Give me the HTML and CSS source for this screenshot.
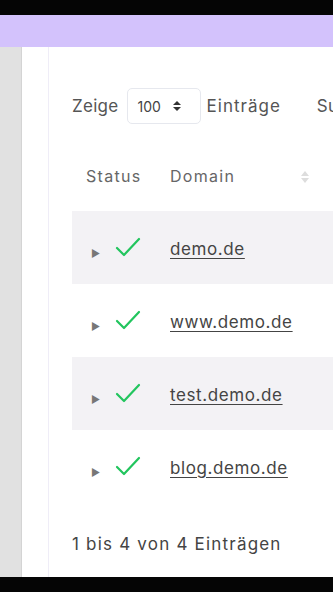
FILE: index.html
```html
<!DOCTYPE html>
<html lang="de">
<head>
    <meta charset="UTF-8">
    <meta name="viewport" content="width=device-width, initial-scale=1.0">
    <title>Domains</title>
    <link rel="stylesheet" href="styles.css">
</head>
<body>

<div class="screen">
    <div class="black-bar"></div>
    <div class="topnav"></div>
    <div class="main">
        <div class="sidebar"></div>
        <div class="gutter"></div>
        <div class="card">
            <div class="toolbar">
                <span>Zeige</span>
                <div class="select">
                    <span>100</span>
                    <svg width="10" height="12" viewBox="0 0 10 12">
                        <path d="M1 5 L5 1 L9 5 Z M1 7 L5 11 L9 7 Z" fill="#333"/>
                    </svg>
                </div>
                <span>Einträge</span>
                <span class="search">Suchen</span>
            </div>

            <table class="domains">
                <thead>
                    <tr>
                        <th class="col-status">Status</th>
                        <th class="col-domain">Domain
                            <svg class="sort" width="8" height="14" viewBox="0 0 8 14">
                                <path d="M0 6 L4 1 L8 6 Z M0 8 L4 13 L8 8 Z" fill="#ddd"/>
                            </svg>
                        </th>
                    </tr>
                </thead>
                <tbody>
                    <tr class="odd">
                        <td class="col-status"><span class="caret">&#9654;</span><svg class="check" width="26" height="20" viewBox="0 0 26 20"><path d="M2 11 L9 18 L24 2" fill="none" stroke="#22c55e" stroke-width="2.2" stroke-linecap="round" stroke-linejoin="round"/></svg></td>
                        <td class="col-domain"><a href="#">demo.de</a></td>
                    </tr>
                    <tr>
                        <td class="col-status"><span class="caret">&#9654;</span><svg class="check" width="26" height="20" viewBox="0 0 26 20"><path d="M2 11 L9 18 L24 2" fill="none" stroke="#22c55e" stroke-width="2.2" stroke-linecap="round" stroke-linejoin="round"/></svg></td>
                        <td class="col-domain"><a href="#">www.demo.de</a></td>
                    </tr>
                    <tr class="odd">
                        <td class="col-status"><span class="caret">&#9654;</span><svg class="check" width="26" height="20" viewBox="0 0 26 20"><path d="M2 11 L9 18 L24 2" fill="none" stroke="#22c55e" stroke-width="2.2" stroke-linecap="round" stroke-linejoin="round"/></svg></td>
                        <td class="col-domain"><a href="#">test.demo.de</a></td>
                    </tr>
                    <tr>
                        <td class="col-status"><span class="caret">&#9654;</span><svg class="check" width="26" height="20" viewBox="0 0 26 20"><path d="M2 11 L9 18 L24 2" fill="none" stroke="#22c55e" stroke-width="2.2" stroke-linecap="round" stroke-linejoin="round"/></svg></td>
                        <td class="col-domain"><a href="#">blog.demo.de</a></td>
                    </tr>
                </tbody>
            </table>

            <div class="info">1 bis 4 von 4 Einträgen</div>
        </div>
    </div>
    <div class="black-bar"></div>
</div>

</body>
</html>
```

FILE: styles.css
```css
* {
    margin: 0;
    padding: 0;
    box-sizing: border-box;
    font-family: 'Inter', 'Roboto', sans-serif;
}

body {
    background-color: #000;
    overflow: hidden;
}

.screen {
    display: flex;
    flex-direction: column;
    width: 333px;
    height: 592px;
}

.black-bar {
    height: 15px;
    background-color: #050505;
}

.topnav {
    height: 32px;
    background-color: #d3c2fc;
}

.main {
    flex: 1;
    display: flex;
    background-color: #fff;
    overflow: hidden;
}

.sidebar {
    width: 22px;
    background-color: #e1e1e1;
    border-right: 1px solid #d4d4d4;
}

.gutter {
    width: 26px;
    background-color: #fff;
}

.card {
    flex: 1;
    border-left: 1px solid #efedf7;
    padding: 41px 0 0 23px;
    white-space: nowrap;
    overflow: hidden;
}

/* Show entries row */
.toolbar {
    display: flex;
    align-items: center;
    font-size: 17px;
    letter-spacing: 0.3px;
    color: #555;
    height: 36px;
}

.toolbar > span {
    flex-shrink: 0;
}

.toolbar > span:nth-child(3) {
    letter-spacing: 1px;
}

.select {
    flex-shrink: 0;
    display: flex;
    align-items: center;
    gap: 11px;
    width: 74px;
    height: 36px;
    padding: 0 10px;
    margin: 0 6px 0 8px;
    border: 1px solid #e6e8ee;
    border-radius: 5px;
    font-size: 14px;
    letter-spacing: 0;
    color: #444;
}

.search {
    margin-left: 36px;
}

/* Table */
.domains {
    border-collapse: collapse;
    margin-top: 17px;
    width: 300px;
}

.domains th {
    text-align: left;
    font-weight: 400;
    font-size: 16px;
    letter-spacing: 1.3px;
    color: #666;
    height: 70px;
}

.domains th.col-domain {
    position: relative;
}

.sort {
    position: absolute;
    left: 131px;
    top: 29px;
}

.col-status {
    width: 98px;
    padding-left: 14px;
}

.domains td {
    height: 73px;
    padding-top: 2px;
    font-size: 17px;
    letter-spacing: 0.6px;
}

.domains tr.odd td {
    background-color: #f3f2f5;
}

.caret {
    display: inline-block;
    font-size: 10px;
    color: #777;
    vertical-align: middle;
    margin: 6px 14px 0 5px;
}

.check {
    vertical-align: middle;
    margin-top: -6px;
}

.col-domain a {
    color: #444;
    text-decoration: underline;
    text-underline-offset: 3px;
}

.info {
    margin-top: 31px;
    font-size: 17px;
    letter-spacing: 1.2px;
    color: #444;
}
```
